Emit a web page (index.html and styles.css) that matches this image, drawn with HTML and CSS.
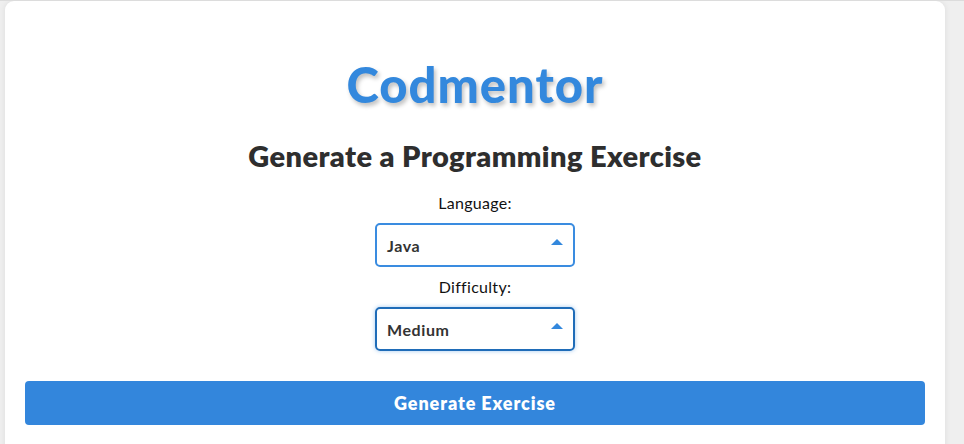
FILE: index.html
```html
<!DOCTYPE html>
<html lang="en">
<head>
<meta charset="utf-8">
<title>Codmentor</title>
<link rel="stylesheet" href="styles.css">
</head>
<body>
<div class="page">
  <main class="card">
    <h1 class="brand">Codmentor</h1>
    <h2 class="heading">Generate a Programming Exercise</h2>
    <form class="form">
      <label class="label" for="lang">Language:</label>
      <div class="select">
        <span class="value">Java</span>
        <span class="arrow"></span>
      </div>
      <label class="label" for="diff">Difficulty:</label>
      <div class="select select-focus">
        <span class="value">Medium</span>
        <span class="arrow"></span>
      </div>
      <button type="button" class="btn">Generate Exercise</button>
    </form>
  </main>
</div>
</body>
</html>
```
FILE: styles.css
```css
* { box-sizing: border-box; }
html, body { margin: 0; padding: 0; }
body {
  background: #efefef;
  font-family: "Lato", "Noto Sans", sans-serif;
  border-top: 1px solid #dcdcdc;
  height: 444px;
  overflow: hidden;
}
.page {
  display: flex;
  padding: 0 19px 0 5px;
}
.card {
  flex: 1;
  background: #fff;
  border-radius: 9px;
  padding: 55px 20px 40px;
  box-shadow: 0 0 6px rgba(0,0,0,0.08);
  min-height: 460px;
}
.brand {
  margin: 0;
  text-align: center;
  font-size: 49px;
  line-height: 56px;
  font-weight: 900;
  color: #3388dd;
  text-shadow: 2px 3px 4px rgba(0,0,0,0.25);
  letter-spacing: 1px;
}
.heading {
  margin: 27px 0 0;
  text-align: center;
  font-size: 29px;
  line-height: 34px;
  font-weight: 800;
  color: #2e2e2e;
  letter-spacing: 0.4px;
}
.form {
  display: flex;
  flex-direction: column;
  align-items: center;
  margin-top: 20px;
}
.label {
  font-size: 16px;
  line-height: 20px;
  color: #111;
  letter-spacing: 0.3px;
}
.select {
  margin-top: 10px;
  margin-bottom: 10px;
  width: 200px;
  height: 44px;
  border: 2px solid #3a8ce0;
  border-radius: 5px;
  display: flex;
  align-items: center;
  justify-content: space-between;
  padding: 0 10px 0 10px;
}
.select-focus {
  border-color: #1f6cb8;
  box-shadow: 0 0 4px rgba(51,136,221,0.45);
}
.value {
  font-size: 16px;
  font-weight: 700;
  color: #333;
  letter-spacing: 0.6px;
}
.arrow {
  width: 0;
  height: 0;
  border-left: 6px solid transparent;
  border-right: 6px solid transparent;
  border-bottom: 6px solid #3388dd;
  margin-bottom: 6px;
}
.btn {
  margin-top: 20px;
  align-self: stretch;
  height: 44px;
  border: none;
  border-radius: 4px;
  background: #3386dc;
  color: #fff;
  font-family: inherit;
  font-size: 18px;
  font-weight: 800;
  letter-spacing: 0.9px;
}
```
